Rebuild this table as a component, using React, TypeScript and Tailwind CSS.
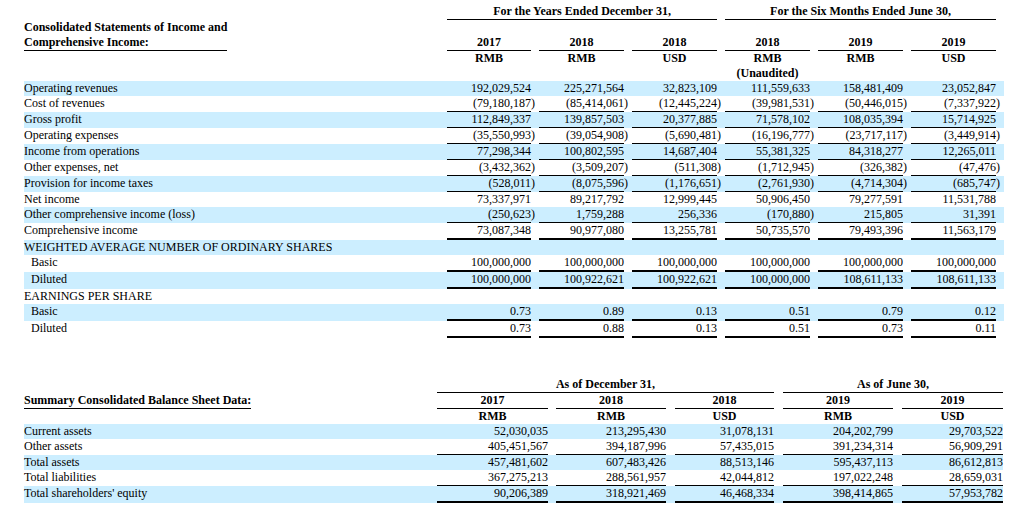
import { Fragment } from "react";

type Row = {
  label: string;
  values?: string[];
  border?: "single" | "double";
  indent?: boolean;
};

const topRows: Row[] = [
  { label: "Operating revenues", values: ["192,029,524", "225,271,564", "32,823,109", "111,559,633", "158,481,409", "23,052,847"] },
  { label: "Cost of revenues", values: ["(79,180,187)", "(85,414,061)", "(12,445,224)", "(39,981,531)", "(50,446,015)", "(7,337,922)"], border: "single" },
  { label: "Gross profit", values: ["112,849,337", "139,857,503", "20,377,885", "71,578,102", "108,035,394", "15,714,925"], border: "single" },
  { label: "Operating expenses", values: ["(35,550,993)", "(39,054,908)", "(5,690,481)", "(16,196,777)", "(23,717,117)", "(3,449,914)"], border: "single" },
  { label: "Income from operations", values: ["77,298,344", "100,802,595", "14,687,404", "55,381,325", "84,318,277", "12,265,011"], border: "single" },
  { label: "Other expenses, net", values: ["(3,432,362)", "(3,509,207)", "(511,308)", "(1,712,945)", "(326,382)", "(47,476)"], border: "single" },
  { label: "Provision for income taxes", values: ["(528,011)", "(8,075,596)", "(1,176,651)", "(2,761,930)", "(4,714,304)", "(685,747)"], border: "single" },
  { label: "Net income", values: ["73,337,971", "89,217,792", "12,999,445", "50,906,450", "79,277,591", "11,531,788"] },
  { label: "Other comprehensive income (loss)", values: ["(250,623)", "1,759,288", "256,336", "(170,880)", "215,805", "31,391"], border: "single" },
  { label: "Comprehensive income", values: ["73,087,348", "90,977,080", "13,255,781", "50,735,570", "79,493,396", "11,563,179"], border: "double" },
  { label: "WEIGHTED AVERAGE NUMBER OF ORDINARY SHARES" },
  { label: "Basic", indent: true, values: ["100,000,000", "100,000,000", "100,000,000", "100,000,000", "100,000,000", "100,000,000"], border: "double" },
  { label: "Diluted", indent: true, values: ["100,000,000", "100,922,621", "100,922,621", "100,000,000", "108,611,133", "108,611,133"], border: "double" },
  { label: "EARNINGS PER SHARE" },
  { label: "Basic", indent: true, values: ["0.73", "0.89", "0.13", "0.51", "0.79", "0.12"], border: "double" },
  { label: "Diluted", indent: true, values: ["0.73", "0.88", "0.13", "0.51", "0.73", "0.11"], border: "double" },
];

const balanceRows: Row[] = [
  { label: "Current assets", values: ["52,030,035", "213,295,430", "31,078,131", "204,202,799", "29,703,522"] },
  { label: "Other assets", values: ["405,451,567", "394,187,996", "57,435,015", "391,234,314", "56,909,291"], border: "single" },
  { label: "Total assets", values: ["457,481,602", "607,483,426", "88,513,146", "595,437,113", "86,612,813"] },
  { label: "Total liabilities", values: ["367,275,213", "288,561,957", "42,044,812", "197,022,248", "28,659,031"], border: "single" },
  { label: "Total shareholders' equity", values: ["90,206,389", "318,921,469", "46,468,334", "398,414,865", "57,953,782"], border: "double" },
];

// top table: number cell + 8px paren cell
const topCols = ["w-[84px]", "w-[85px]", "w-[85px]", "w-[85px]", "w-[85px]", "w-[85px]"];
const topYears = ["2017", "2018", "2018", "2018", "2019", "2019"];
const topCur = ["RMB", "RMB", "USD", "RMB", "RMB", "USD"];

// bottom table: gap before each cell
const botCols = [
  { gap: "w-[8px]", w: "w-[111px]" },
  { gap: "w-[8px]", w: "w-[110px]" },
  { gap: "w-[9px]", w: "w-[99px]" },
  { gap: "w-[9px]", w: "w-[110px]" },
  { gap: "w-[9px]", w: "w-[101px]" },
];
const botYears = ["2017", "2018", "2018", "2019", "2019"];
const botCur = ["RMB", "RMB", "USD", "RMB", "USD"];

const borderFor = (b?: Row["border"]) =>
  b === "single" ? "border-b border-black" : b === "double" ? "border-b-2 border-black" : "";

function TopRow({ row, i }: { row: Row; i: number }) {
  const bg = i % 2 === 0 ? "bg-[#cceeff]" : "";
  return (
    <div className={`flex items-start ${bg}`}>
      <div className={`w-[423px] h-[15px] leading-[15px] whitespace-nowrap ${row.indent ? "pl-[7px]" : ""}`}>
        {row.label}
      </div>
      {topCols.map((w, c) => {
        const v = row.values?.[c];
        const neg = !!v && v.endsWith(")");
        return (
          <Fragment key={c}>
            <div className={`${w} box-content h-[15px] leading-[15px] text-right whitespace-nowrap ${v ? borderFor(row.border) : ""}`}>
              {neg ? v!.slice(0, -1) : v}
            </div>
            <div className="w-[8px] h-[15px] leading-[15px]">{neg ? ")" : ""}</div>
          </Fragment>
        );
      })}
    </div>
  );
}

function BalanceRow({ row, i }: { row: Row; i: number }) {
  const bg = i % 2 === 0 ? "bg-[#cceeff]" : "";
  return (
    <div className={`flex items-start ${bg}`}>
      <div className="w-[405px] h-[15px] leading-[15px] whitespace-nowrap">{row.label}</div>
      {botCols.map((col, c) => (
        <Fragment key={c}>
          <div className={col.gap} />
          <div className={`${col.w} box-content h-[15px] leading-[15px] text-right ${borderFor(row.border)}`}>
            {row.values?.[c]}
          </div>
        </Fragment>
      ))}
    </div>
  );
}

export default function App() {
  return (
    <div className="w-[1020px] h-[510px] bg-white overflow-hidden font-['Liberation_Serif',serif] text-[12px] text-black">
      <div className="ml-[24px] w-[980px] pt-[4px]">
        {/* income statement header */}
        <div className="flex items-start">
          <div className="w-[423px]" />
          <div className="w-[270px] border-b border-black h-[16px] leading-[15px] text-center font-bold whitespace-nowrap">
            For the Years Ended December 31,
          </div>
          <div className="w-[8px]" />
          <div className="w-[271px] border-b border-black h-[16px] leading-[15px] text-center font-bold whitespace-nowrap">
            For the Six Months Ended June 30,
          </div>
        </div>
        <div className="flex items-start">
          <div className="w-[423px]">
            <div className="w-fit border-b border-black font-bold leading-[15px] whitespace-nowrap">
              <div>Consolidated Statements of Income and</div>
              <div>Comprehensive Income:</div>
            </div>
          </div>
          {topCols.map((w, c) => (
            <Fragment key={c}>
              <div className={`${w} box-content pt-[15px] h-[15px] leading-[15px] text-center font-bold border-b border-black`}>
                {topYears[c]}
              </div>
              <div className="w-[8px]" />
            </Fragment>
          ))}
        </div>
        <div className="flex items-start h-[30px]">
          <div className="w-[423px]" />
          {topCols.map((w, c) => (
            <Fragment key={c}>
              <div className={`${w} text-center font-bold leading-[15px]`}>
                <div>{topCur[c]}</div>
                {c === 3 && <div className="whitespace-nowrap">(Unaudited)</div>}
              </div>
              <div className="w-[8px]" />
            </Fragment>
          ))}
        </div>
        {topRows.map((row, i) => (
          <TopRow key={i} row={row} i={i} />
        ))}
      </div>

      {/* balance sheet */}
      <div className="ml-[24px] w-[979px] mt-[39px]">
        <div className="flex items-start">
          <div className="w-[413px]" />
          <div className="w-[337px] border-b border-black h-[16px] leading-[15px] text-center font-bold whitespace-nowrap">
            As of December 31,
          </div>
          <div className="w-[9px]" />
          <div className="w-[220px] border-b border-black h-[16px] leading-[15px] text-center font-bold whitespace-nowrap">
            As of June 30,
          </div>
        </div>
        <div className="flex items-start">
          <div className="w-[405px]">
            <div className="w-fit border-b border-black font-bold leading-[15px] whitespace-nowrap">
              Summary Consolidated Balance Sheet Data:
            </div>
          </div>
          {botCols.map((col, c) => (
            <Fragment key={c}>
              <div className={col.gap} />
              <div className={`${col.w} box-content h-[15px] leading-[15px] text-center font-bold border-b border-black`}>
                {botYears[c]}
              </div>
            </Fragment>
          ))}
        </div>
        <div className="flex items-start">
          <div className="w-[405px]" />
          {botCols.map((col, c) => (
            <Fragment key={c}>
              <div className={col.gap} />
              <div className={`${col.w} h-[15px] leading-[15px] text-center font-bold`}>{botCur[c]}</div>
            </Fragment>
          ))}
        </div>
        {balanceRows.map((row, i) => (
          <BalanceRow key={i} row={row} i={i} />
        ))}
      </div>
    </div>
  );
}
